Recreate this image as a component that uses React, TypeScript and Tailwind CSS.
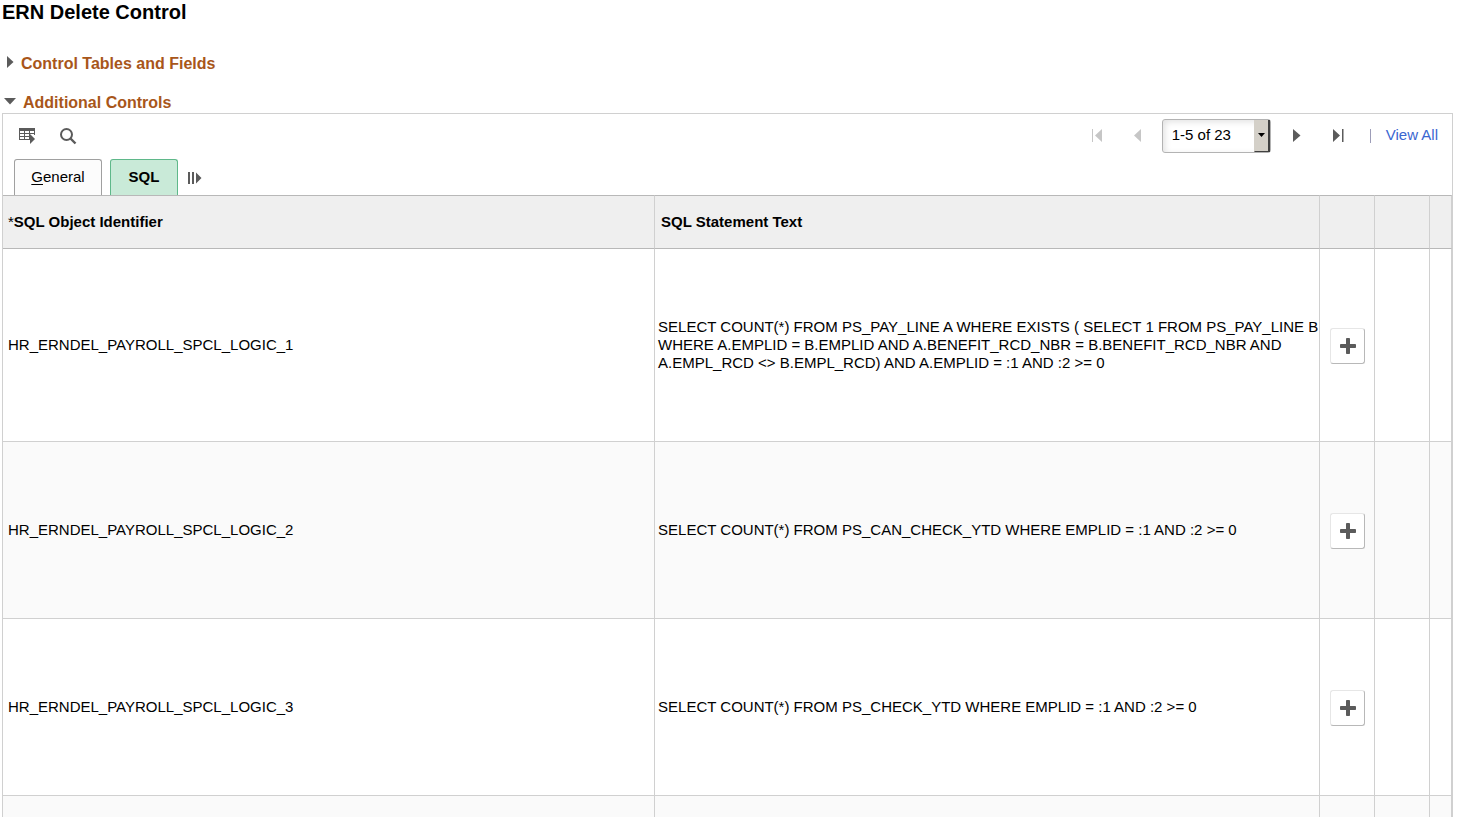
import React, { useState } from 'react';

interface SqlRow {
  id: string;
  statement: string;
}

const ROWS: SqlRow[] = [
  {
    id: 'HR_ERNDEL_PAYROLL_SPCL_LOGIC_1',
    statement:
      'SELECT COUNT(*) FROM PS_PAY_LINE A WHERE EXISTS ( SELECT 1 FROM PS_PAY_LINE B WHERE A.EMPLID = B.EMPLID AND A.BENEFIT_RCD_NBR = B.BENEFIT_RCD_NBR AND A.EMPL_RCD <> B.EMPL_RCD) AND A.EMPLID = :1 AND :2 >= 0',
  },
  {
    id: 'HR_ERNDEL_PAYROLL_SPCL_LOGIC_2',
    statement: 'SELECT COUNT(*) FROM PS_CAN_CHECK_YTD WHERE EMPLID = :1 AND :2 >= 0',
  },
  {
    id: 'HR_ERNDEL_PAYROLL_SPCL_LOGIC_3',
    statement: 'SELECT COUNT(*) FROM PS_CHECK_YTD WHERE EMPLID = :1 AND :2 >= 0',
  },
];

function GridActionsIcon() {
  return (
    <svg width="17" height="17" viewBox="0 0 17 17" fill="#5b5b5b" shapeRendering="crispEdges">
      <path d="M0 0h16v3H0z" />
      <path d="M0 3h1v9H0zM5 3h1v9H5zM10 3h1v9h-1zM15 3h1v4h-1zM0 5h16v1H0zM0 8h11v1H0zM0 11h11v1H0z" />
      <path d="M11 6l5 5-5 5z" shapeRendering="auto" />
    </svg>
  );
}

function SearchIcon() {
  return (
    <svg width="17" height="17" viewBox="0 0 17 17" fill="none" stroke="#5b5b5b">
      <circle cx="6.500" cy="6.500" r="5.500" strokeWidth="2" />
      <path d="M10.500 10.500l5 5" strokeWidth="2.400" />
    </svg>
  );
}

function ShowAllColumnsIcon() {
  return (
    <svg width="14" height="12" viewBox="0 0 14 12" fill="#5b5b5b">
      <path d="M0 0h2v12H0zM4 0h2v12H4zM8 0.500l5.500 5.500L8 11.500z" />
    </svg>
  );
}

function PlusIcon() {
  return (
    <svg width="16" height="16" viewBox="0 0 16 16" fill="#5b5b5b">
      <rect x="6" y="0" width="4" height="16" rx="0.800" />
      <rect x="0" y="6" width="16" height="4" rx="0.800" />
    </svg>
  );
}

function Pager() {
  return (
    <div className="flex items-center pb-0.5">
      <button type="button" disabled aria-label="First" className="mr-8">
        <svg width="10" height="13" viewBox="0 0 10 13" fill="#c6c6c6">
          <path d="M0 0h1v13H0zM10 0v13L3 6.500z" />
        </svg>
      </button>
      <button type="button" disabled aria-label="Previous" className="mr-5">
        <svg width="8" height="13" viewBox="0 0 8 13" fill="#c6c6c6">
          <path d="M7 0v13L0 6.500z" />
        </svg>
      </button>
      <div className="relative mr-[22px]">
        <select
          aria-label="Rows"
          className="block h-[34px] w-[109px] appearance-none rounded-[3px] border border-[#b3b3b3] bg-white pl-[9px] text-[15px] text-black shadow-[inset_2px_2px_6px_#e2e2e2]"
        >
          <option>1-5 of 23</option>
          <option>6-10 of 23</option>
          <option>11-15 of 23</option>
          <option>16-20 of 23</option>
          <option>21-23 of 23</option>
        </select>
        <span className="pointer-events-none absolute inset-y-px right-px flex w-4 items-center justify-center border-r-2 border-b border-l border-r-[#404040] border-b-[#404040] border-l-[#d4d0c8] bg-[#d4d0c8]">
          <svg width="7" height="4" viewBox="0 0 7 4">
            <path d="M0 0h7L3.500 4z" />
          </svg>
        </span>
      </div>
      <button type="button" aria-label="Next" className="mr-8">
        <svg width="8" height="13" viewBox="0 0 8 13" fill="#5b5b5b">
          <path d="M0 0v13l7.500-6.500z" />
        </svg>
      </button>
      <button type="button" aria-label="Last" className="mr-[26px]">
        <svg width="11" height="13" viewBox="0 0 11 13" fill="#5b5b5b">
          <path d="M0 0v13l7-6.500zM9 0h1.500v13H9z" />
        </svg>
      </button>
      <span className="mr-[15px] h-[14px] w-px bg-[#9d9db8]" />
      <a href="#" className="text-[15px] text-[#3a66d1]">
        View All
      </a>
    </div>
  );
}

export default function App() {
  const [rows] = useState<SqlRow[]>(ROWS);

  return (
    <div className="h-screen overflow-hidden bg-white pr-[9px] pl-[2px] font-['Liberation_Sans',Arial,sans-serif] text-[15px] text-black">
      <h1 className="text-xl leading-6 font-bold">ERN Delete Control</h1>

      <h2 className="mt-7">
        <button type="button" className="flex items-center pl-[5px] text-base leading-6 font-bold text-[#a8561a]">
          <svg width="7" height="12" viewBox="0 0 7 12" fill="#5b5b5b" className="mr-[7px] mb-1">
            <path d="M0 0v12l6.500-6z" />
          </svg>
          Control Tables and Fields
        </button>
      </h2>

      <h2 className="mt-[15px] mb-[-2px]">
        <button type="button" className="flex items-center pl-[2px] text-base leading-6 font-bold text-[#a8561a]">
          <svg width="12" height="7" viewBox="0 0 12 7" fill="#5b5b5b" className="mr-[7px] mb-1">
            <path d="M0 0h12L6 6.500z" />
          </svg>
          Additional Controls
        </button>
      </h2>

      <section className="border border-[#d0d0d0]">
        <div className="flex h-[45px] items-center justify-between pr-[14px] pl-4">
          <div className="flex items-center gap-6">
            <button type="button" aria-label="Grid actions">
              <GridActionsIcon />
            </button>
            <button type="button" aria-label="Find">
              <SearchIcon />
            </button>
          </div>
          <Pager />
        </div>

        <div className="flex items-center pl-[11px]">
          <button
            type="button"
            className="mr-2 h-9 w-[88px] rounded-t-[3px] border border-b-0 border-[#a0a0a0] bg-[#fcfcfc]"
          >
            <span className="underline underline-offset-2">G</span>eneral
          </button>
          <button
            type="button"
            className="mr-[10px] h-9 w-[68px] rounded-t-[3px] border border-b-0 border-[#5fb88a] bg-[#c9ead8] font-bold"
          >
            SQL
          </button>
          <button type="button" aria-label="Show all columns" className="pt-0.5">
            <ShowAllColumnsIcon />
          </button>
        </div>

        <table className="w-full table-fixed border-separate border-spacing-0">
          <colgroup>
            <col className="w-[45%]" />
            <col />
            <col className="w-[55px]" />
            <col className="w-[55px]" />
            <col className="w-[22px]" />
          </colgroup>
          <thead>
            <tr className="h-[54px] bg-[#efefef] text-left *:border-y *:border-r *:border-y-[#b8b8b8] *:border-r-[#d0d0d0]">
              <th className="pl-[5px]">
                <span className="font-normal">*</span>SQL Object Identifier
              </th>
              <th className="pl-[6px]">SQL Statement Text</th>
              <th />
              <th />
              <th />
            </tr>
          </thead>
          <tbody>
            {rows.map((row, i) => (
              <tr
                key={row.id}
                className={`${i === 0 ? 'h-[193px]' : 'h-[177px]'} leading-[18px] even:bg-[#fafafa] *:border-r *:border-b *:border-[#d0d0d0]`}
              >
                <td className="pl-[5px]">{row.id}</td>
                <td className="pl-[3px]">{row.statement}</td>
                <td className="pt-0.5 pl-[10px]">
                  <button
                    type="button"
                    aria-label="Add row"
                    className="flex h-9 w-[35px] items-center justify-center rounded-[3px] border border-[#e6e6e6] border-r-[#b8b8b8] border-b-[#b8b8b8] bg-white"
                  >
                    <PlusIcon />
                  </button>
                </td>
                <td />
                <td />
              </tr>
            ))}
            <tr className="h-[177px] bg-[#fafafa] *:border-r *:border-b *:border-[#d0d0d0]">
              <td />
              <td />
              <td />
              <td />
              <td />
            </tr>
          </tbody>
        </table>
      </section>
    </div>
  );
}
